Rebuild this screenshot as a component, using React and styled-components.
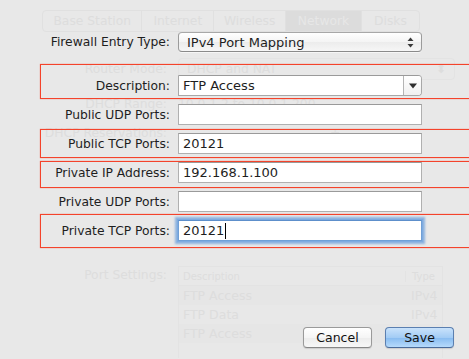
import React from "react";
import styled, { createGlobalStyle } from "styled-components";

const GlobalStyle = createGlobalStyle`
  html, body {
    margin: 0;
    padding: 0;
    background: #e8e8e8;
  }
  * {
    box-sizing: border-box;
  }
`;

const UI_FONT = `"DejaVu Sans", "Liberation Sans", sans-serif`;

const Window = styled.div`
  position: relative;
  width: 469px;
  height: 359px;
  overflow: hidden;
  background: #e8e8e8;
  font-family: ${UI_FONT};
  font-size: 12.3px;
  color: #1e1e1e;
`;

/* ---------- faded window content behind the sheet ---------- */

const Backdrop = styled.div`
  display: flex;
  flex-direction: column;
  padding: 10px 0 0 42px;
  color: #dddddd;
  user-select: none;
`;

const Tabs = styled.div`
  display: flex;
  width: 378px;
  height: 22px;
  border: 1px solid #e0e0e0;
  border-radius: 4px;
  overflow: hidden;
`;

const Tab = styled.div`
  flex: ${(p) => p.$w} 0 0;
  display: flex;
  align-items: center;
  justify-content: center;
  border-left: 1px solid #e0e0e0;
  background: ${(p) => (p.$active ? "#dcdcdc" : "transparent")};
  color: ${(p) => (p.$active ? "#e7e7e7" : "#dddddd")};
  &:first-child {
    border-left: none;
  }
`;

const GhostRow = styled.div`
  display: grid;
  grid-template-columns: 125px 1fr;
  column-gap: 11px;
  align-items: center;
  height: ${(p) => p.$h}px;
  margin-top: ${(p) => p.$mt}px;
`;

const GhostLabel = styled.div`
  text-align: right;
  align-self: ${(p) => (p.$top ? "start" : "center")};
  padding-top: ${(p) => (p.$top ? "2px" : "0")};
`;

const GhostPopup = styled.div`
  display: flex;
  align-items: center;
  justify-content: space-between;
  width: 277px;
  height: 22px;
  padding: 0 8px;
  border: 1px solid #e3e3e3;
  border-radius: 4px;
`;

const GhostExtra = styled.span`
  padding-left: 152px;
`;

const GhostTable = styled.div`
  width: 265px;
  height: 92px;
  border: 1px solid #e3e3e3;
  border-bottom: none;
  display: flex;
  flex-direction: column;
  align-self: start;
`;

const GhostTableRow = styled.div`
  display: grid;
  grid-template-columns: 222px 1fr;
  height: 19px;
  align-items: center;
  padding-left: 4px;
  font-size: ${(p) => (p.$head ? "10px" : "12.5px")};
  border-bottom: ${(p) => (p.$head ? "1px solid #e3e3e3" : "none")};
  background: ${(p) => (p.$alt ? "#e6e6e6" : "transparent")};
  span + span {
    padding-left: 6px;
    border-left: ${(p) => (p.$head ? "1px solid #e3e3e3" : "none")};
  }
`;

/* ---------- sheet ---------- */

const Sheet = styled.div`
  position: absolute;
  inset: 0;
  display: flex;
  flex-direction: column;
  padding: 32px 0 0 40px;
`;

const Row = styled.div`
  position: relative;
  display: grid;
  grid-template-columns: 130px 244px;
  column-gap: 8px;
  align-items: center;
  margin-top: ${(p) => p.$mt || 0}px;
`;

const Label = styled.label`
  text-align: right;
  white-space: nowrap;
  color: #1e1e1e;
  position: relative;
  z-index: 1;
`;

const Highlight = styled.div`
  position: absolute;
  left: 0;
  top: ${(p) => p.$t}px;
  bottom: ${(p) => p.$b}px;
  right: ${(p) => p.$r}px;
  border: 1px solid #f4432b;
  box-shadow: 0 0 1px rgba(244, 67, 43, 0.7);
  pointer-events: none;
`;

const PopupButton = styled.div`
  position: relative;
  display: flex;
  align-items: center;
  height: 20px;
  padding: 0 0 0 8px;
  font-size: 13px;
  border: 1px solid #9b9b9b;
  border-top-color: #a8a8a8;
  border-bottom-color: #8a8a8a;
  border-radius: 4px;
  background: linear-gradient(#ffffff, #f4f4f4 50%, #ececec 51%, #f6f6f6);
  box-shadow: 0 1px 0 rgba(255, 255, 255, 0.6);
`;

const ComboBox = styled.div`
  display: flex;
  height: 21px;
  border: 1px solid #a8a8a8;
  border-top-color: #9a9a9a;
  border-radius: 0 4px 4px 0;
  background: #fff;
  overflow: hidden;
`;

const ComboText = styled.div`
  flex: 1;
  display: flex;
  align-items: center;
  padding-left: 4px;
  font-size: 13px;
`;

const ComboArrow = styled.div`
  width: 18px;
  display: flex;
  align-items: center;
  justify-content: center;
  border-left: 1px solid #b4b4b4;
  background: linear-gradient(#ffffff, #f0f0f0);
`;

const TextField = styled.div`
  display: flex;
  align-items: center;
  height: 21px;
  padding-left: 4px;
  font-size: 13px;
  background: #fff;
  border: 1px solid ${(p) => (p.$focused ? "#6f9fd6" : "#b0b0b0")};
  border-top-color: ${(p) => (p.$focused ? "#5d8fcb" : "#9a9a9a")};
  box-shadow: ${(p) =>
    p.$focused
      ? "0 0 0 1px #7fabe0, 0 0 2px 3px rgba(110, 160, 220, 0.75)"
      : "none"};
  position: relative;
  z-index: 1;
`;

const Caret = styled.span`
  display: inline-block;
  width: 1px;
  height: 16px;
  margin-left: 1px;
  background: #000;
`;

const Footer = styled.div`
  display: flex;
  gap: 13px;
  margin-top: 86px;
  margin-left: 263px;
`;

const Button = styled.button`
  width: 69px;
  height: 21px;
  padding: 0;
  font-family: ${UI_FONT};
  font-size: 12.5px;
  color: #111;
  border-radius: 4px;
  border: 1px solid ${(p) => (p.$primary ? "#5b7fb0" : "#9a9a9a")};
  border-bottom-color: ${(p) => (p.$primary ? "#4a6b9a" : "#868686")};
  background: ${(p) =>
    p.$primary
      ? "linear-gradient(#c9e2fb, #a3ccf5 50%, #87bbf0 51%, #b6dafb)"
      : "linear-gradient(#ffffff, #f5f5f5 50%, #ececec 51%, #f7f7f7)"};
  box-shadow: 0 1px 1px rgba(0, 0, 0, 0.12);
`;

const UpDown = () => (
  <svg width="7" height="11" viewBox="0 0 7 11" style={{ marginLeft: "auto", marginRight: 7 }}>
    <path d="M3.5 0.5 L6.5 4 L0.5 4 Z" fill="#3a3a3a" />
    <path d="M3.5 10.5 L6.5 7 L0.5 7 Z" fill="#3a3a3a" />
  </svg>
);

const DownTriangle = () => (
  <svg width="8" height="6" viewBox="0 0 8 6">
    <path d="M0 0.5 L8 0.5 L4 5.5 Z" fill="#2d2d2d" />
  </svg>
);

const fields = [
  { label: "Public UDP Ports:", value: "" },
  { label: "Public TCP Ports:", value: "20121", hl: { t: -4, b: -4, r: -18 } },
  { label: "Private IP Address:", value: "192.168.1.100", hl: { t: -1, b: -5, r: -20 } },
  { label: "Private UDP Ports:", value: "" },
  { label: "Private TCP Ports:", value: "20121", focused: true, hl: { t: -6, b: -7, r: -16 } },
];

const portRows = [
  { name: "FTP Access", type: "IPv4", alt: true },
  { name: "FTP Data", type: "IPv4" },
  { name: "FTP Access", type: "IPv4", alt: true },
];

export default function App() {
  return (
    <>
      <GlobalStyle />
      <Window>
        <Backdrop>
          <Tabs>
            <Tab $w={100}>Base Station</Tab>
            <Tab $w={72}>Internet</Tab>
            <Tab $w={72}>Wireless</Tab>
            <Tab $w={76} $active>Network</Tab>
            <Tab $w={58}>Disks</Tab>
          </Tabs>
          <GhostRow $h={22} $mt={26}>
            <GhostLabel>Router Mode:</GhostLabel>
            <GhostPopup>
              <span>DHCP and NAT</span>
              <span>⬍</span>
            </GhostPopup>
          </GhostRow>
          <GhostRow $h={20} $mt={14}>
            <GhostLabel>DHCP Range:</GhostLabel>
            <span>10.0.1.2 to 10.0.1.200</span>
          </GhostRow>
          <GhostRow $h={22} $mt={8}>
            <GhostLabel>DHCP Reservations:</GhostLabel>
            <GhostExtra>+ –</GhostExtra>
          </GhostRow>
          <GhostRow $h={92} $mt={122}>
            <GhostLabel $top>Port Settings:</GhostLabel>
            <GhostTable>
              <GhostTableRow $head>
                <span>Description</span>
                <span>Type</span>
              </GhostTableRow>
              {portRows.map((r, i) => (
                <GhostTableRow key={i} $alt={r.alt}>
                  <span>{r.name}</span>
                  <span>{r.type}</span>
                </GhostTableRow>
              ))}
            </GhostTable>
          </GhostRow>
        </Backdrop>

        <Sheet>
          <Row>
            <Label>Firewall Entry Type:</Label>
            <PopupButton>
              <span>IPv4 Port Mapping</span>
              <UpDown />
            </PopupButton>
          </Row>
          <Row $mt={23}>
            <Highlight $t={-11} $b={-3} $r={-11} />
            <Label>Description:</Label>
            <ComboBox>
              <ComboText>FTP Access</ComboText>
              <ComboArrow>
                <DownTriangle />
              </ComboArrow>
            </ComboBox>
          </Row>
          {fields.map((f) => (
            <Row key={f.label} $mt={8}>
              {f.hl && <Highlight $t={f.hl.t} $b={f.hl.b} $r={f.hl.r} />}
              <Label>{f.label}</Label>
              <TextField $focused={f.focused}>
                {f.value}
                {f.focused && <Caret />}
              </TextField>
            </Row>
          ))}
          <Footer>
            <Button>Cancel</Button>
            <Button $primary>Save</Button>
          </Footer>
        </Sheet>
      </Window>
    </>
  );
}
